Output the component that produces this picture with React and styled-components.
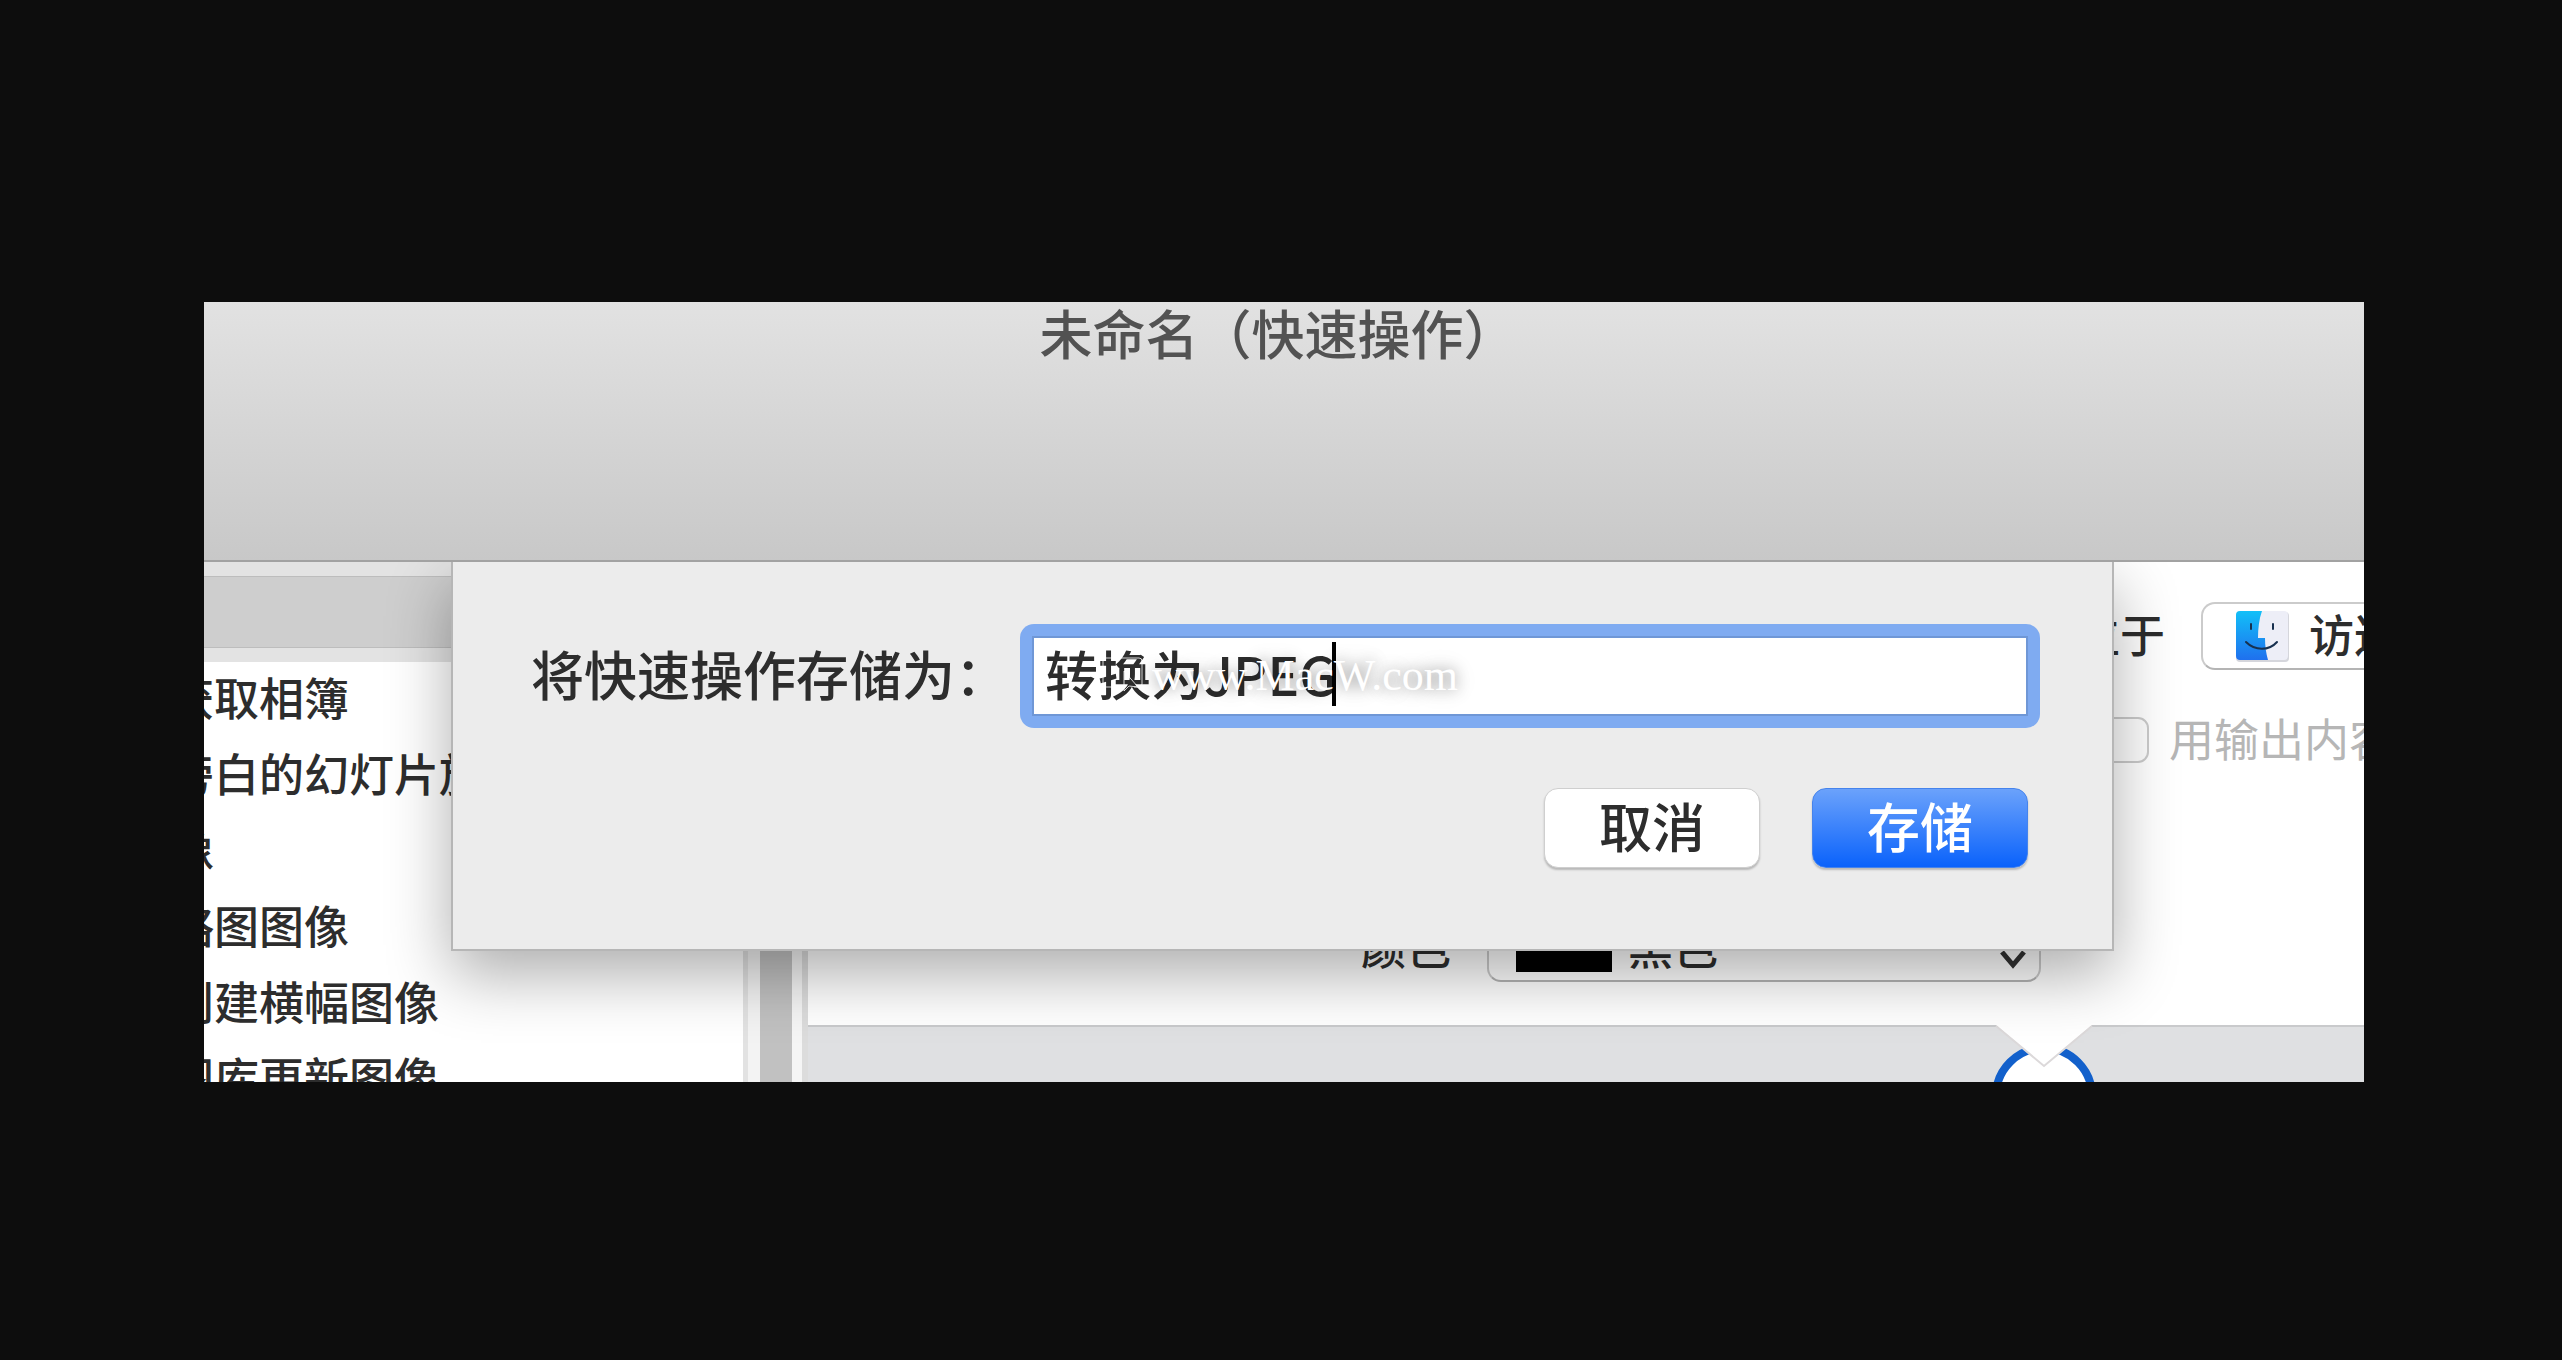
import React from "react";
import styled, { createGlobalStyle } from "styled-components";

const GlobalStyle = createGlobalStyle`
  * {
    box-sizing: border-box;
  }
  body {
    margin: 0;
    background: #0d0d0d;
    font-family: "Noto Sans CJK SC", sans-serif;
    font-weight: 500;
    color: #2d2d2d;
  }
  button, input, select {
    font-family: inherit;
    font-weight: inherit;
    color: inherit;
  }
`;

const Page = styled.div`
  display: flex;
  flex-direction: column;
  height: 100vh;
  padding: 302px 198px 278px 204px;
`;

const Window = styled.main`
  position: relative;
  display: flex;
  flex: 1;
  flex-direction: column;
  min-height: 0;
  overflow: hidden;
  background: #fff;
`;

const TitleBar = styled.header`
  flex: 0 0 260px;
  padding-right: 12px;
  text-align: center;
  background: linear-gradient(#e2e2e2, #c8c8c8);
  border-bottom: 2px solid #a2a2a2;
`;

const Title = styled.h1`
  margin: 0;
  font-size: 53px;
  line-height: 60px;
  font-weight: inherit;
  color: #525252;
`;

const Body = styled.div`
  position: relative;
  display: flex;
  flex: 1;
  min-height: 0;
  overflow: hidden;
`;

const Sidebar = styled.aside`
  flex: 0 0 556px;
  overflow: hidden;
  background: #f3f3f3;
`;

const SearchBar = styled.div`
  height: 100px;
  background: #cecece;
  border-top: 14px solid #e3e3e3;
  border-bottom: 14px solid #e3e3e3;
  box-shadow: inset 0 1px #bdbdbd, inset 0 -1px #bdbdbd, 0 1px #b0b0b0;
`;

const List = styled.ul`
  margin: 0;
  margin-right: 12px;
  padding: 0;
  list-style: none;
  background: #fff;
  border-right: 5px solid #e2e2e2;
`;

const ListItem = styled.li`
  margin-left: -35px;
  height: 76px;
  font-size: 45px;
  line-height: 70px;
  white-space: nowrap;
`;

const Splitter = styled.div`
  flex: 0 0 32px;
  background: #c1c1c1;
`;

const Workflow = styled.section`
  display: flex;
  flex: 1;
  flex-direction: column;
  min-width: 0;
  border-left: 10px solid #f5f5f5;
  box-shadow: inset 6px 0 #dcdcdc;
`;

const Options = styled.div`
  display: flex;
  flex-direction: column;
  gap: 36px;
  margin-right: -120px;
  padding: 40px 0 43px;
`;

const OptionRow = styled.div`
  display: flex;
  align-items: center;
  justify-content: flex-end;
  gap: ${(props) => props.$gap || "36px"};
  height: 68px;
  font-size: 45px;
  font-weight: ${(props) => (props.$disabled ? 400 : "inherit")};
  line-height: 60px;
  white-space: nowrap;
  color: ${(props) => (props.$disabled ? "#b6b6b6" : "inherit")};
  label {
    padding-bottom: 4px;
  }
`;

const ColorRow = styled(OptionRow)`
  margin-top: 104px;
  padding-right: 443px;
`;

const PopUp = styled.div`
  display: flex;
  align-items: center;
  width: ${(props) => props.$width};
  height: 68px;
  padding: 0 12px 0 ${(props) => props.$inset};
  gap: ${(props) => props.$gap};
  background: #fff;
  border: 2px solid #cbcbcb;
  border-bottom-color: #b4b4b4;
  border-radius: 14px;
`;

const Select = styled.select`
  flex: 1;
  min-width: 0;
  height: 64px;
  padding: 0 0 4px;
  font-size: 45px;
  line-height: 60px;
  background: none;
  border: 0;
  appearance: none;
  outline: none;
`;

const Swatch = styled.span`
  width: 96px;
  height: 48px;
  background: #000;
`;

const Checkbox = styled.input`
  width: 46px;
  height: 46px;
  margin: 0;
  background: #fdfdfd;
  border: 2px solid #cbcbcb;
  border-radius: 11px;
  appearance: none;
`;

const Canvas = styled.div`
  position: relative;
  flex: 1;
  margin-left: 6px;
  background: #dfe0e2;
  border-top: 2px solid #c9cacc;
`;

const Pointer = styled.svg`
  position: absolute;
  top: -2px;
  right: 266px;
`;

const Sheet = styled.form`
  position: absolute;
  top: 0;
  left: 247px;
  right: 250px;
  height: 389px;
  padding: 62px 72px 0 78px;
  background: #ececec;
  border: 2px solid #b6b6b6;
  border-top: 0;
  box-shadow: 0 24px 60px rgba(0, 0, 0, 0.32);
`;

const FieldRow = styled.div`
  display: flex;
  align-items: center;
`;

const FieldLabel = styled.label`
  flex: 0 0 489px;
  padding-bottom: 6px;
  font-size: 53px;
  line-height: 64px;
  white-space: nowrap;
`;

const Field = styled.div`
  position: relative;
  flex: 1;
  height: 104px;
  padding: 12px;
  background: #7fabf1;
  border-radius: 14px;
`;

const TextInput = styled.input`
  display: block;
  width: 100%;
  height: 80px;
  padding: 0 11px 6px;
  font-size: 53px;
  line-height: 70px;
  background: #fff;
  border: 2px solid #6f97d6;
  border-radius: 0;
  outline: none;
`;

const Caret = styled.span`
  position: absolute;
  top: 18px;
  left: 312px;
  width: 4px;
  height: 64px;
  background: #000;
`;

const Actions = styled.div`
  display: flex;
  justify-content: flex-end;
  gap: 52px;
  margin-top: 60px;
  padding-right: 12px;
`;

const Button = styled.button`
  width: 216px;
  height: 80px;
  padding: 0 0 6px;
  font-size: 53px;
  line-height: 70px;
  color: ${(props) => (props.$primary ? "#fff" : "inherit")};
  background: ${(props) =>
    props.$primary ? "linear-gradient(#6ba2fb, #0a62fb)" : "#fff"};
  border: 1px solid ${(props) => (props.$primary ? "#4583ec" : "#cfcfcf")};
  border-radius: 14px;
  box-shadow: 0 2px 2px rgba(0, 0, 0, 0.22);
`;

const Watermark = styled.div`
  position: absolute;
  top: 350px;
  left: 0;
  right: 0;
  display: flex;
  align-items: center;
  justify-content: center;
  gap: 8px;
  padding-right: 8px;
  font-family: "Liberation Serif", serif;
  font-size: 44px;
  font-weight: 400;
  line-height: 48px;
  color: #fff;
  text-shadow: 0 0 14px rgba(0, 0, 0, 0.4), 0 0 24px rgba(0, 0, 0, 0.2);
  pointer-events: none;
`;

const items = [
  "获取相簿",
  "旁白的幻灯片放映",
  "像",
  "略图图像",
  "创建横幅图像",
  "图库更新图像",
];

function FinderIcon() {
  return (
    <svg width="54" height="52" viewBox="0 0 54 52" aria-hidden="true">
      <defs>
        <linearGradient id="finderBlue" x1="0" y1="0" x2="0" y2="1">
          <stop offset="0" stopColor="#12c0f8" />
          <stop offset="1" stopColor="#1f70ee" />
        </linearGradient>
      </defs>
      <rect x="1" y="2" width="53" height="50" rx="4" fill="#d5d6dc" />
      <rect x="1" y="1" width="52" height="49" rx="4" fill="#edeef7" />
      <path
        d="M5 1H27C24 9 23 19 23 28H30C30 36 31 43 33 50H5a4 4 0 0 1-4-4V5a4 4 0 0 1 4-4z"
        fill="url(#finderBlue)"
      />
      <path
        d="M16 14v5M38 14v5"
        fill="none"
        stroke="#17304f"
        strokeWidth="2"
        strokeLinecap="round"
      />
      <path
        d="M11 32C20 41 34 41 42 32"
        fill="none"
        stroke="#17304f"
        strokeWidth="2"
        strokeLinecap="round"
      />
    </svg>
  );
}

function Chevron() {
  return (
    <svg width="28" height="52" viewBox="0 0 28 52" aria-hidden="true">
      <path
        d="M3 19L14 6L25 19M3 30L14 43L25 30"
        fill="none"
        stroke="#333"
        strokeWidth="5"
      />
    </svg>
  );
}

function App() {
  return (
    <Page>
      <GlobalStyle />
      <Window>
        <TitleBar>
          <Title>未命名（快速操作）</Title>
        </TitleBar>
        <Body>
          <Sidebar>
            <SearchBar />
            <List>
              {items.map((item) => (
                <ListItem key={item}>{item}</ListItem>
              ))}
            </List>
          </Sidebar>
          <Splitter />
          <Workflow>
            <Options>
              <OptionRow>
                <label htmlFor="app">位于</label>
                <PopUp $width="283px" $inset="32px" $gap="20px">
                  <FinderIcon />
                  <Select id="app">
                    <option>访达</option>
                  </Select>
                </PopUp>
              </OptionRow>
              <OptionRow $gap="20px" $disabled>
                <Checkbox type="checkbox" id="replace" disabled />
                <label htmlFor="replace">用输出内容替换</label>
              </OptionRow>
              <ColorRow>
                <label htmlFor="color">颜色</label>
                <PopUp $width="554px" $inset="27px" $gap="16px">
                  <Swatch />
                  <Select id="color">
                    <option>黑色</option>
                  </Select>
                  <Chevron />
                </PopUp>
              </ColorRow>
            </Options>
            <Canvas>
              <Pointer width="108" height="58" viewBox="0 0 108 58">
                <circle
                  cx="54"
                  cy="71"
                  r="48"
                  fill="#fff"
                  stroke="#1260cb"
                  strokeWidth="8"
                />
                <path d="M6 0L54 41L102 0z" fill="#fff" />
                <path
                  d="M6 1L54 41L102 1"
                  fill="none"
                  stroke="#dcd9da"
                  strokeWidth="2"
                />
              </Pointer>
            </Canvas>
          </Workflow>
          {/* save sheet */}
          <Sheet>
            <FieldRow>
              <FieldLabel htmlFor="name">将快速操作存储为：</FieldLabel>
              <Field>
                <TextInput id="name" type="text" defaultValue="转换为JPEG" />
                <Caret />
              </Field>
            </FieldRow>
            <Actions>
              <Button type="button">取消</Button>
              <Button type="button" $primary>
                存储
              </Button>
            </Actions>
          </Sheet>
        </Body>
        <Watermark>
          <svg width="42" height="38" viewBox="0 0 42 38" aria-hidden="true">
            <path
              d="M20 30H4a3 3 0 0 1-3-3V4a3 3 0 0 1 3-3H37a3 3 0 0 1 3 3V27a3 3 0 0 1-3 3H32M22 14V34L27 29L36 30z"
              fill="none"
              stroke="#fff"
              strokeOpacity="0.8"
            />
          </svg>
          <span>www.MacW.com</span>
        </Watermark>
      </Window>
    </Page>
  );
}

export default App;
